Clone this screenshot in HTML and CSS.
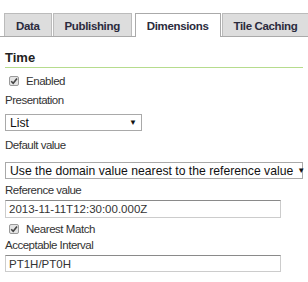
FILE: index.html
```html
<!DOCTYPE html>
<html>
<head>
    <title>Layer - Dimensions</title>
    <link rel="stylesheet" href="styles.css">
</head>
<body>
    <ul class="tabs">
        <li class="tab">Data</li>
        <li class="tab">Publishing</li>
        <li class="tab active">Dimensions</li>
        <li class="tab">Tile Caching</li>
    </ul>

    <div class="panel">
        <h3 class="section-title">Time</h3>

        <div class="check">
            <svg class="box" width="10" height="10" viewBox="0 0 10 10">
                <rect x="0.5" y="0.5" width="9" height="9" rx="1.5" fill="#e4e4e4" stroke="#9a9a9a"/>
                <path d="M2.2 5.2 L4.2 7.3 L8 2.4" fill="none" stroke="#444" stroke-width="1.6"/>
            </svg>
            <span>Enabled</span>
        </div>

        <label class="field-label">Presentation</label>
        <div class="select short">
            <span>List</span><span class="arrow">&#9660;</span>
        </div>

        <label class="field-label">Default value</label>
        <div class="select wide">
            <span>Use the domain value nearest to the reference value</span><span class="arrow">&#9660;</span>
        </div>

        <label class="field-label ref">Reference value</label>
        <input type="text" class="text-input" value="2013-11-11T12:30:00.000Z">

        <div class="check second">
            <svg class="box" width="10" height="10" viewBox="0 0 10 10">
                <rect x="0.5" y="0.5" width="9" height="9" rx="1.5" fill="#e4e4e4" stroke="#9a9a9a"/>
                <path d="M2.2 5.2 L4.2 7.3 L8 2.4" fill="none" stroke="#444" stroke-width="1.6"/>
            </svg>
            <span>Nearest Match</span>
        </div>

        <label class="field-label tight">Acceptable Interval</label>
        <input type="text" class="text-input last" value="PT1H/PT0H">
    </div>
</body>
</html>
```

FILE: styles.css
```css
body {
    margin: 0;
    font-family: "Liberation Sans", Arial, sans-serif;
    color: #333;
    background: #fff;
    overflow: hidden;
}

.tabs {
    list-style: none;
    margin: 13px 0 0 0;
    padding: 0 0 0 4px;
    display: flex;
    border-bottom: 1px solid #aaa;
    white-space: nowrap;
}

.tab {
    box-sizing: border-box;
    height: 23px;
    background-color: #ddd;
    border: 1px solid #bbb;
    border-bottom: none;
    padding: 5px 11px 0 11px;
    margin-right: 1px;
    font-size: 11.5px;
    letter-spacing: -0.35px;
    font-weight: bold;
    color: #2b2b3d;
    line-height: 14px;
}

.tab.active {
    background-color: #fff;
    margin-bottom: -1px;
    height: 24px;
    margin-left: 2px;
    border-color: #aaa;
}

.panel {
    padding: 0 5px;
}

.section-title {
    margin: 13px 0 0 0;
    font-size: 13px;
    font-weight: bold;
    color: #222;
    border-bottom: 1px solid #b6dc8d;
    padding-bottom: 1px;
    line-height: 16px;
}

.check {
    display: flex;
    align-items: center;
    height: 14px;
    margin: 6px 0 0 4px;
    font-size: 11.5px;
    letter-spacing: -0.45px;
    line-height: 14px;
}

.check.second {
    margin-top: 4px;
}

.check .box {
    margin-right: 7px;
    flex-shrink: 0;
}

.field-label {
    display: block;
    margin-top: 5px;
    font-size: 11.5px;
    letter-spacing: -0.5px;
    line-height: 14px;
}

.field-label.ref {
    margin-top: 4px;
}

.field-label.tight {
    margin-top: 2px;
}

.select {
    display: flex;
    justify-content: space-between;
    align-items: center;
    box-sizing: border-box;
    height: 17px;
    margin-top: 7px;
    padding: 0 4px 0 4px;
    border: 1px solid #a9a9a9;
    font-size: 12.2px;
    color: #111;
    white-space: nowrap;
}

.select.short {
    width: 137px;
}

.select.wide {
    width: 298px;
    margin-top: 10px;
}

.select + .field-label {
    margin-top: 7px;
}

.select.wide + .field-label {
    margin-top: 4px;
}

.arrow {
    font-size: 8px;
    margin-left: 4px;
}

.text-input {
    display: block;
    box-sizing: border-box;
    width: 276px;
    height: 18px;
    margin: 3px 0 0 0;
    padding: 0 3px;
    border: 1px solid #ccc;
    border-top-color: #8a8a8a;
    border-radius: 0;
    outline: none;
    font-family: "Liberation Sans", Arial, sans-serif;
    font-size: 11.5px;
    color: #333;
}

.text-input.last {
    height: 17px;
}
```
